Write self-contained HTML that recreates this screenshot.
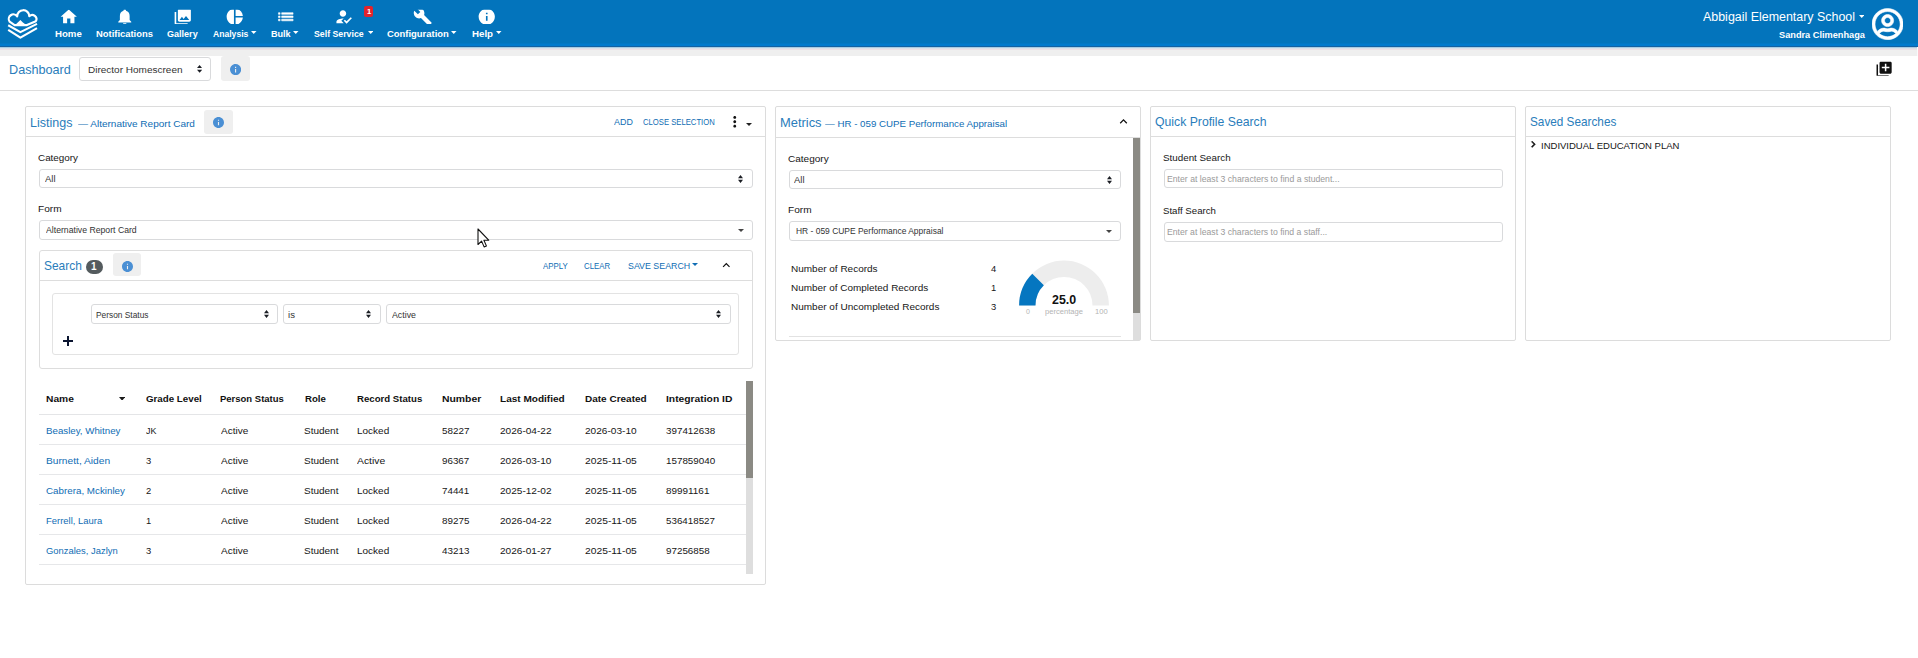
<!DOCTYPE html>
<html lang="en"><head><meta charset="utf-8"><title>Dashboard</title>
<style>
html,body{margin:0;padding:0;background:#fff}
body{width:1918px;height:658px;position:relative;overflow:hidden;font-family:"Liberation Sans", sans-serif;}
body>div,body>span,body>svg{position:absolute;display:block}
body>span{white-space:pre;transform-origin:0 0}
</style></head><body>
<div style="left:0px;top:46px;width:1918px;height:10px;background:#efefef"></div>
<div style="left:0px;top:0px;width:1918px;height:46px;background:#0374bc"></div>
<div style="left:0px;top:43px;width:1918px;height:1px;background:#0377c4"></div>
<div style="left:0px;top:44px;width:1918px;height:2px;background:#027acd"></div>
<div style="left:0px;top:46px;width:1918px;height:1px;background:#1560a2"></div>
<div style="left:0px;top:47px;width:1918px;height:1px;background:#a9cce2"></div>
<div style="left:0px;top:48px;width:1918px;height:1px;background:#dde0e9"></div>
<div style="left:0px;top:49px;width:1918px;height:1px;background:#ece1e6"></div>
<div style="left:1917px;top:47px;width:1px;height:9px;background:#fafafa"></div>
<svg style="left:0px;top:0px;" width="46" height="46" viewBox="0 0 46 46" fill="#fff">
<g fill="none" stroke="#fff" stroke-width="2.15" stroke-linejoin="round" stroke-linecap="butt">
<path d="M14.600 25.100L9.600 21.700A4.100 4.100 0 0 1 17.200 16.400A5.700 5.700 0 0 1 29.300 16.100A4.200 4.200 0 0 1 35.800 21.300L27 25.100z"/>
<path d="M8.200 25.300l12.200 6.800 16.600-8.200"/>
<path d="M8.200 29.900l12.200 7.700 16.600-9.500"/>
</g>
<path d="M14.600 25.600l5.800-5.500 2.500 2.300 4.200 3.200z" fill="#fff"/>
</svg>
<svg style="left:58.6px;top:7.1px;clip-path:inset(2.56px 0 2.5px 0)" width="19.5" height="19.5" viewBox="0 0 24 24" fill="#fff"><path d="M10 20v-6h4v6h5v-8h3L12 3 2 12h3v8z"/></svg>
<span id="t0" style="left:55.00px;top:29.83px;font-size:9.3px;line-height:9.3px;font-weight:700;color:#fff;transform:scaleX(1.0378);">Home</span>
<svg style="left:114.85px;top:7.1px;clip-path:inset(2.56px 0 2.5px 0)" width="19.5" height="19.5" viewBox="0 0 24 24" fill="#fff"><path d="M12 22c1.100 0 2-.9 2-2h-4c0 1.100.89 2 2 2zm6-6v-5c0-3.070-1.640-5.640-4.500-6.320V4c0-.83-.67-1.500-1.500-1.500s-1.500.67-1.500 1.500v.68C7.630 5.360 6 7.920 6 11v5l-2 2v1h16v-1l-2-2z"/></svg>
<span id="t1" style="left:96.00px;top:29.83px;font-size:9.3px;line-height:9.3px;font-weight:700;color:#fff;transform:scaleX(1.0105);">Notifications</span>
<svg style="left:173.15px;top:7.1px;clip-path:inset(2.56px 0 2.5px 0)" width="19.5" height="19.5" viewBox="0 0 24 24" fill="#fff"><path d="M22 16V4c0-1.100-.9-2-2-2H8c-1.100 0-2 .9-2 2v12c0 1.100.9 2 2 2h12c1.100 0 2-.9 2-2zm-11-4l2.030 2.710L16 11l4 5H8l3-4zM2 6v14c0 1.100.9 2 2 2h14v-2H4V6H2z"/></svg>
<span id="t2" style="left:167.00px;top:29.83px;font-size:9.3px;line-height:9.3px;font-weight:700;color:#fff;transform:scaleX(0.9723);">Gallery</span>
<svg style="left:225.3px;top:7.1px;clip-path:inset(2.56px 0 2.5px 0)" width="19.5" height="19.5" viewBox="0 0 24 24" fill="#fff"><path d="M11 2v20c-5.070-.5-9-4.790-9-10s3.930-9.500 9-10zm2.030 0v8.990H22c-.47-4.740-4.240-8.520-8.970-8.990zm0 11.010V22c4.740-.47 8.500-4.250 8.970-8.990h-8.970z"/></svg>
<span id="t3" style="left:213.00px;top:29.83px;font-size:9.3px;line-height:9.3px;font-weight:700;color:#fff;transform:scaleX(0.9237);">Analysis</span>
<svg style="left:251.3px;top:31px" width="5.5" height="3" viewBox="0 0 10 5" preserveAspectRatio="none" fill="#fff"><path d="M0 0h10L5 5z"/></svg>
<svg style="left:275.65px;top:7.1px;clip-path:inset(2.56px 0 2.5px 0)" width="19.5" height="19.5" viewBox="0 0 24 24" fill="#fff"><path stroke="#fff" stroke-width="0.7" d="M3 13h2v-2H3v2zm0 4h2v-2H3v2zm0-8h2V7H3v2zm4 4h14v-2H7v2zm0 4h14v-2H7v2zM7 7v2h14V7H7z"/></svg>
<span id="t4" style="left:271.00px;top:29.83px;font-size:9.3px;line-height:9.3px;font-weight:700;color:#fff;transform:scaleX(0.9764);">Bulk</span>
<svg style="left:293.3px;top:31px" width="5.5" height="3" viewBox="0 0 10 5" preserveAspectRatio="none" fill="#fff"><path d="M0 0h10L5 5z"/></svg>
<svg style="left:334.25px;top:7.1px;clip-path:inset(2.56px 0 2.5px 0)" width="19.5" height="19.5" viewBox="0 0 24 24" fill="#fff"><path d="M9 17l3-2.940c-.39-.04-.68-.06-1-.06-2.670 0-8 1.340-8 4v2h9l-3-3zm2-5c2.210 0 4-1.790 4-4s-1.790-4-4-4-4 1.790-4 4 1.790 4 4 4m4.470 8.500L12 17l1.400-1.410 2.070 2.080 5.130-5.170 1.400 1.410z"/></svg>
<span id="t5" style="left:314.00px;top:29.83px;font-size:9.3px;line-height:9.3px;font-weight:700;color:#fff;transform:scaleX(0.9414);">Self Service</span>
<svg style="left:367.6px;top:31px" width="5.5" height="3" viewBox="0 0 10 5" preserveAspectRatio="none" fill="#fff"><path d="M0 0h10L5 5z"/></svg>
<svg style="left:412.5px;top:7.1px;clip-path:inset(2.56px 0 2.5px 0)" width="19.5" height="19.5" viewBox="0 0 24 24" fill="#fff"><path d="M22.700 19l-9.100-9.100c.9-2.300.4-5-1.500-6.900-2-2-5-2.400-7.400-1.300L9 6 6 9 1.600 4.700C.4 7.100.9 10.100 2.900 12.100c1.900 1.900 4.600 2.400 6.900 1.500l9.100 9.100c.4.4 1 .4 1.400 0l2.300-2.300c.5-.4.5-1.100.1-1.400z"/></svg>
<span id="t6" style="left:387.00px;top:29.83px;font-size:9.3px;line-height:9.3px;font-weight:700;color:#fff;transform:scaleX(1.0141);">Configuration</span>
<svg style="left:451.3px;top:31px" width="5.5" height="3" viewBox="0 0 10 5" preserveAspectRatio="none" fill="#fff"><path d="M0 0h10L5 5z"/></svg>
<svg style="left:477.3px;top:7.1px;clip-path:inset(2.56px 0 2.5px 0)" width="19.5" height="19.5" viewBox="0 0 24 24" fill="#fff"><path d="M12 2C6.480 2 2 6.480 2 12s4.480 10 10 10 10-4.480 10-10S17.520 2 12 2zm1 15h-2v-6h2v6zm0-8h-2V7h2v2z"/></svg>
<span id="t7" style="left:472.00px;top:29.83px;font-size:9.3px;line-height:9.3px;font-weight:700;color:#fff;transform:scaleX(1.0453);">Help</span>
<svg style="left:496px;top:31px" width="5.5" height="3" viewBox="0 0 10 5" preserveAspectRatio="none" fill="#fff"><path d="M0 0h10L5 5z"/></svg>
<div style="left:363.6px;top:6.2px;width:9.9px;height:10.7px;background:#e3232c;border-radius:2px"></div>
<span id="t8" style="left:367.00px;top:8.47px;font-size:7.6px;line-height:7.6px;font-weight:700;color:#fff;">1</span>
<span id="t9" style="left:1703.00px;top:11.39px;font-size:12.3px;line-height:12.3px;font-weight:400;color:#fff;transform:scaleX(1.0110);">Abbigail Elementary School</span>
<svg style="left:1858.6px;top:15px" width="5.5" height="3" viewBox="0 0 10 5" preserveAspectRatio="none" fill="#fff"><path d="M0 0h10L5 5z"/></svg>
<span id="t10" style="left:1779.00px;top:31.13px;font-size:9.3px;line-height:9.3px;font-weight:700;color:#fff;transform:scaleX(0.9905);">Sandra Climenhaga</span>
<svg style="left:1872.3px;top:8.1px;" width="31.2" height="32.2" viewBox="0 0 496 512" fill="#fff"><path stroke="#fff" stroke-width="9" d="M248 104c-53 0-96 43-96 96s43 96 96 96 96-43 96-96-43-96-96-96zm0 144c-26.500 0-48-21.500-48-48s21.500-48 48-48 48 21.500 48 48-21.500 48-48 48zm0-240C111 8 0 119 0 256s111 248 248 248 248-111 248-248S385 8 248 8zm0 448c-49.700 0-95.100-18.300-130.100-48.400 14.900-23 40.400-38.600 69.600-39.500 20.800 6.400 40.600 9.600 60.500 9.600s39.700-3.100 60.500-9.600c29.200 1 54.700 16.500 69.600 39.500-35 30.100-80.400 48.400-130.100 48.400zm162.700-84.100c-24.400-31.400-62.100-51.900-105.100-51.900-10.200 0-26 9.600-57.600 9.600-31.500 0-47.400-9.600-57.600-9.600-42.900 0-80.600 20.500-105.100 51.900C61.900 339.200 48 299.200 48 256c0-110.300 89.700-200 200-200s200 89.700 200 200c0 43.200-13.900 83.200-37.300 115.900z"/></svg>
<div style="left:0px;top:90px;width:1918px;height:1px;background:#ddd"></div>
<span id="t11" style="left:9.00px;top:62.64px;font-size:13.3px;line-height:13.3px;font-weight:400;color:#2a7dbb;transform:scaleX(0.9509);">Dashboard</span>
<div style="left:79px;top:57px;width:132px;height:24px;border:1px solid #d9dadc;border-radius:3px;box-sizing:border-box;background:#fff"></div>
<span id="t12" style="left:88.00px;top:65.07px;font-size:9.6px;line-height:9.6px;font-weight:400;color:#333;transform:scaleX(1.0427);">Director Homescreen</span>
<svg style="left:197.0px;top:65.2px" width="5.2" height="7.8" viewBox="0 0 4 5" preserveAspectRatio="none" fill="#1b1e24"><path d="M2 0L0 2h4zm0 5L0 3h4z"/></svg>
<div style="left:221px;top:56px;width:29px;height:25px;background:#efefef;border-radius:3px"></div>
<svg style="left:229.9px;top:63.6px" width="11.2" height="11.2" viewBox="2 2 20 20" fill="#4a8fd4"><path d="M12 2C6.48 2 2 6.48 2 12s4.48 10 10 10 10-4.480 10-10S17.520 2 12 2zm1 15h-2v-6h2v6zm0-8h-2V7h2v2z"/></svg>
<svg style="left:1875.3px;top:59.5px;clip-path:inset(2px 0 2px 0)" width="18.2" height="18.2" viewBox="0 0 24 24" fill="#111"><path d="M4 6H2v14c0 1.100.9 2 2 2h14v-2H4V6zm16-4H8c-1.100 0-2 .9-2 2v12c0 1.100.9 2 2 2h12c1.100 0 2-.9 2-2V4c0-1.100-.9-2-2-2zm-1 9h-4v4h-2v-4H9V9h4V5h2v4h4v2z"/></svg>
<div style="left:25px;top:106px;width:741px;height:479px;border:1px solid #dcdcdc;border-radius:2px;box-sizing:border-box;background:#fff"></div>
<div style="left:25px;top:136px;width:741px;height:1px;background:#ddd"></div>
<span id="t13" style="left:30.00px;top:115.74px;font-size:13.3px;line-height:13.3px;font-weight:400;color:#2a7dbb;transform:scaleX(0.9418);">Listings</span>
<span id="t14" style="left:78.00px;top:118.87px;font-size:9.6px;line-height:9.6px;font-weight:400;color:#0f6db4;transform:scaleX(1.0440);">— Alternative Report Card</span>
<div style="left:203.8px;top:110px;width:29px;height:24px;background:#efefef;border-radius:3px"></div>
<svg style="left:212.8px;top:116.9px" width="11" height="11" viewBox="2 2 20 20" fill="#4a8fd4"><path d="M12 2C6.48 2 2 6.48 2 12s4.48 10 10 10 10-4.480 10-10S17.520 2 12 2zm1 15h-2v-6h2v6zm0-8h-2V7h2v2z"/></svg>
<span id="t15" style="left:614.00px;top:118.28px;font-size:9px;line-height:9px;font-weight:400;color:#0f6db4;transform:scaleX(0.9923);">ADD</span>
<span id="t16" style="left:643.00px;top:118.28px;font-size:9px;line-height:9px;font-weight:400;color:#0f6db4;transform:scaleX(0.8541);">CLOSE SELECTION</span>
<svg style="left:725.55px;top:113.3px;" width="17.5" height="17.5" viewBox="0 0 24 24" fill="#111"><path d="M12 8c1.100 0 2-.9 2-2s-.9-2-2-2-2 .9-2 2 .9 2 2 2zm0 2c-1.100 0-2 .9-2 2s.9 2 2 2 2-.9 2-2-.9-2-2-2zm0 6c-1.100 0-2 .9-2 2s.9 2 2 2 2-.9 2-2-.9-2-2-2z"/></svg>
<svg style="left:745.9px;top:123px" width="6" height="3" viewBox="0 0 10 5" preserveAspectRatio="none" fill="#222"><path d="M0 0h10L5 5z"/></svg>
<span id="t17" style="left:38.00px;top:152.86px;font-size:9.5px;line-height:9.5px;font-weight:400;color:#161616;transform:scaleX(1.0390);">Category</span>
<div style="left:39px;top:169px;width:714px;height:19px;border:1px solid #d9dadc;border-radius:3px;box-sizing:border-box;background:#fff"></div>
<span id="t18" style="left:45.00px;top:175.18px;font-size:9px;line-height:9px;font-weight:400;color:#333;transform:scaleX(1.0490);">All</span>
<svg style="left:738.1px;top:175px" width="5" height="8" viewBox="0 0 4 5" preserveAspectRatio="none" fill="#1b1e24"><path d="M2 0L0 2h4zm0 5L0 3h4z"/></svg>
<span id="t19" style="left:38.00px;top:203.86px;font-size:9.5px;line-height:9.5px;font-weight:400;color:#161616;transform:scaleX(1.0622);">Form</span>
<div style="left:39px;top:220px;width:714px;height:20px;border:1px solid #d9dadc;border-radius:3px;box-sizing:border-box;background:#fff"></div>
<span id="t20" style="left:46.00px;top:226.18px;font-size:9px;line-height:9px;font-weight:400;color:#333;transform:scaleX(0.9644);">Alternative Report Card</span>
<svg style="left:738px;top:228.7px" width="6" height="3" viewBox="0 0 10 5" preserveAspectRatio="none" fill="#444"><path d="M0 0h10L5 5z"/></svg>
<div style="left:39px;top:250px;width:714px;height:118.5px;border:1px solid #ddd;border-radius:3px;box-sizing:border-box"></div>
<div style="left:39px;top:280px;width:714px;height:1px;background:#ddd"></div>
<span id="t21" style="left:44.00px;top:259.14px;font-size:13.3px;line-height:13.3px;font-weight:400;color:#2a7dbb;transform:scaleX(0.8990);">Search</span>
<div style="left:85.9px;top:260.2px;width:17px;height:13.4px;background:#545b5e;border-radius:7px"></div>
<span id="t22" style="left:91.00px;top:261.94px;font-size:10px;line-height:10px;font-weight:700;color:#fff;">1</span>
<div style="left:113px;top:253.4px;width:27.6px;height:23.1px;background:#efefef;border-radius:3px"></div>
<svg style="left:121.7px;top:260.6px" width="11" height="11" viewBox="2 2 20 20" fill="#4a8fd4"><path d="M12 2C6.48 2 2 6.48 2 12s4.48 10 10 10 10-4.480 10-10S17.520 2 12 2zm1 15h-2v-6h2v6zm0-8h-2V7h2v2z"/></svg>
<span id="t23" style="left:543.00px;top:261.58px;font-size:9px;line-height:9px;font-weight:400;color:#0f6db4;transform:scaleX(0.8708);">APPLY</span>
<span id="t24" style="left:584.00px;top:261.58px;font-size:9px;line-height:9px;font-weight:400;color:#0f6db4;transform:scaleX(0.8698);">CLEAR</span>
<span id="t25" style="left:628.00px;top:261.58px;font-size:9px;line-height:9px;font-weight:400;color:#0f6db4;transform:scaleX(0.9811);">SAVE SEARCH</span>
<svg style="left:692px;top:262.8px" width="6" height="3" viewBox="0 0 10 5" preserveAspectRatio="none" fill="#0f6db4"><path d="M0 0h10L5 5z"/></svg>
<svg style="left:719.3px;top:257.5px;" width="14.6" height="14.6" viewBox="0 0 24 24" fill="#111"><path d="M12 8l-6 6 1.410 1.410L12 10.830l4.590 4.580L18 14z"/></svg>
<div style="left:52px;top:293px;width:687px;height:61.5px;border:1px solid #e3e3e3;border-radius:3px;box-sizing:border-box"></div>
<div style="left:91px;top:304px;width:187px;height:20px;border:1px solid #d9dadc;border-radius:3px;box-sizing:border-box;background:#fff"></div>
<span id="t26" style="left:96.00px;top:310.88px;font-size:9px;line-height:9px;font-weight:400;color:#333;transform:scaleX(0.9281);">Person Status</span>
<svg style="left:264.20000000000005px;top:310px" width="5" height="8" viewBox="0 0 4 5" preserveAspectRatio="none" fill="#1b1e24"><path d="M2 0L0 2h4zm0 5L0 3h4z"/></svg>
<div style="left:283.2px;top:304px;width:97.6px;height:20px;border:1px solid #d9dadc;border-radius:3px;box-sizing:border-box;background:#fff"></div>
<span id="t27" style="left:288.00px;top:310.88px;font-size:9px;line-height:9px;font-weight:400;color:#333;transform:scaleX(1.0668);">is</span>
<svg style="left:366.20000000000005px;top:310px" width="5" height="8" viewBox="0 0 4 5" preserveAspectRatio="none" fill="#1b1e24"><path d="M2 0L0 2h4zm0 5L0 3h4z"/></svg>
<div style="left:386.2px;top:304px;width:344.8px;height:20px;border:1px solid #d9dadc;border-radius:3px;box-sizing:border-box;background:#fff"></div>
<span id="t28" style="left:392.00px;top:310.88px;font-size:9px;line-height:9px;font-weight:400;color:#333;transform:scaleX(0.9779);">Active</span>
<svg style="left:716.1px;top:310px" width="5" height="8" viewBox="0 0 4 5" preserveAspectRatio="none" fill="#1b1e24"><path d="M2 0L0 2h4zm0 5L0 3h4z"/></svg>
<div style="left:62.8px;top:340.1px;width:10.2px;height:1.5px;background:#0b1530"></div>
<div style="left:67.2px;top:335.8px;width:1.5px;height:10.2px;background:#0b1530"></div>
<span id="t29" style="left:46.00px;top:393.84px;font-size:9.4px;line-height:9.4px;font-weight:700;color:#111;transform:scaleX(1.0902);">Name</span>
<span id="t30" style="left:146.00px;top:393.84px;font-size:9.4px;line-height:9.4px;font-weight:700;color:#111;transform:scaleX(1.0389);">Grade Level</span>
<span id="t31" style="left:220.00px;top:393.84px;font-size:9.4px;line-height:9.4px;font-weight:700;color:#111;transform:scaleX(1.0122);">Person Status</span>
<span id="t32" style="left:305.00px;top:393.84px;font-size:9.4px;line-height:9.4px;font-weight:700;color:#111;transform:scaleX(1.0297);">Role</span>
<span id="t33" style="left:357.00px;top:393.84px;font-size:9.4px;line-height:9.4px;font-weight:700;color:#111;transform:scaleX(1.0267);">Record Status</span>
<span id="t34" style="left:442.00px;top:393.84px;font-size:9.4px;line-height:9.4px;font-weight:700;color:#111;transform:scaleX(1.1090);">Number</span>
<span id="t35" style="left:500.00px;top:393.84px;font-size:9.4px;line-height:9.4px;font-weight:700;color:#111;transform:scaleX(1.0709);">Last Modified</span>
<span id="t36" style="left:585.00px;top:393.84px;font-size:9.4px;line-height:9.4px;font-weight:700;color:#111;transform:scaleX(1.0652);">Date Created</span>
<span id="t37" style="left:666.00px;top:393.84px;font-size:9.4px;line-height:9.4px;font-weight:700;color:#111;transform:scaleX(1.0981);">Integration ID</span>
<svg style="left:118.8px;top:396.5px" width="6.2" height="3.7" viewBox="0 0 10 5" preserveAspectRatio="none" fill="#1a1a1a"><path d="M0 0h10L5 5z"/></svg>
<div style="left:39px;top:414px;width:707px;height:1px;background:#e4e5e7"></div>
<div style="left:39px;top:444px;width:707px;height:1px;background:#e6e7e9"></div>
<span id="t38" style="left:46.00px;top:426.04px;font-size:9.4px;line-height:9.4px;font-weight:400;color:#0f6db4;transform:scaleX(1.0372);">Beasley, Whitney</span>
<span id="t39" style="left:146.00px;top:426.04px;font-size:9.4px;line-height:9.4px;font-weight:400;color:#161616;transform:scaleX(0.9521);">JK</span>
<span id="t40" style="left:221.00px;top:426.04px;font-size:9.4px;line-height:9.4px;font-weight:400;color:#161616;transform:scaleX(1.0648);">Active</span>
<span id="t41" style="left:304.00px;top:426.04px;font-size:9.4px;line-height:9.4px;font-weight:400;color:#161616;transform:scaleX(1.0657);">Student</span>
<span id="t42" style="left:357.00px;top:426.04px;font-size:9.4px;line-height:9.4px;font-weight:400;color:#161616;transform:scaleX(1.0646);">Locked</span>
<span id="t43" style="left:442.00px;top:426.04px;font-size:9.4px;line-height:9.4px;font-weight:400;color:#161616;transform:scaleX(1.0522);">58227</span>
<span id="t44" style="left:500.00px;top:426.04px;font-size:9.4px;line-height:9.4px;font-weight:400;color:#161616;transform:scaleX(1.0741);">2026-04-22</span>
<span id="t45" style="left:585.00px;top:426.04px;font-size:9.4px;line-height:9.4px;font-weight:400;color:#161616;transform:scaleX(1.0769);">2026-03-10</span>
<span id="t46" style="left:666.00px;top:426.04px;font-size:9.4px;line-height:9.4px;font-weight:400;color:#161616;transform:scaleX(1.0470);">397412638</span>
<div style="left:39px;top:474px;width:707px;height:1px;background:#e6e7e9"></div>
<span id="t47" style="left:46.00px;top:456.04px;font-size:9.4px;line-height:9.4px;font-weight:400;color:#0f6db4;transform:scaleX(1.0877);">Burnett, Aiden</span>
<span id="t48" style="left:146.00px;top:456.04px;font-size:9.4px;line-height:9.4px;font-weight:400;color:#161616;">3</span>
<span id="t49" style="left:221.00px;top:456.04px;font-size:9.4px;line-height:9.4px;font-weight:400;color:#161616;transform:scaleX(1.0648);">Active</span>
<span id="t50" style="left:304.00px;top:456.04px;font-size:9.4px;line-height:9.4px;font-weight:400;color:#161616;transform:scaleX(1.0657);">Student</span>
<span id="t51" style="left:357.00px;top:456.04px;font-size:9.4px;line-height:9.4px;font-weight:400;color:#161616;transform:scaleX(1.1038);">Active</span>
<span id="t52" style="left:442.00px;top:456.04px;font-size:9.4px;line-height:9.4px;font-weight:400;color:#161616;transform:scaleX(1.0462);">96367</span>
<span id="t53" style="left:500.00px;top:456.04px;font-size:9.4px;line-height:9.4px;font-weight:400;color:#161616;transform:scaleX(1.0708);">2026-03-10</span>
<span id="t54" style="left:585.00px;top:456.04px;font-size:9.4px;line-height:9.4px;font-weight:400;color:#161616;transform:scaleX(1.0969);">2025-11-05</span>
<span id="t55" style="left:666.00px;top:456.04px;font-size:9.4px;line-height:9.4px;font-weight:400;color:#161616;transform:scaleX(1.0488);">157859040</span>
<div style="left:39px;top:504px;width:707px;height:1px;background:#e6e7e9"></div>
<span id="t56" style="left:46.00px;top:486.04px;font-size:9.4px;line-height:9.4px;font-weight:400;color:#0f6db4;transform:scaleX(1.0453);">Cabrera, Mckinley</span>
<span id="t57" style="left:146.00px;top:486.04px;font-size:9.4px;line-height:9.4px;font-weight:400;color:#161616;">2</span>
<span id="t58" style="left:221.00px;top:486.04px;font-size:9.4px;line-height:9.4px;font-weight:400;color:#161616;transform:scaleX(1.0648);">Active</span>
<span id="t59" style="left:304.00px;top:486.04px;font-size:9.4px;line-height:9.4px;font-weight:400;color:#161616;transform:scaleX(1.0657);">Student</span>
<span id="t60" style="left:357.00px;top:486.04px;font-size:9.4px;line-height:9.4px;font-weight:400;color:#161616;transform:scaleX(1.0646);">Locked</span>
<span id="t61" style="left:442.00px;top:486.04px;font-size:9.4px;line-height:9.4px;font-weight:400;color:#161616;transform:scaleX(1.0453);">74441</span>
<span id="t62" style="left:500.00px;top:486.04px;font-size:9.4px;line-height:9.4px;font-weight:400;color:#161616;transform:scaleX(1.0741);">2025-12-02</span>
<span id="t63" style="left:585.00px;top:486.04px;font-size:9.4px;line-height:9.4px;font-weight:400;color:#161616;transform:scaleX(1.0969);">2025-11-05</span>
<span id="t64" style="left:666.00px;top:486.04px;font-size:9.4px;line-height:9.4px;font-weight:400;color:#161616;transform:scaleX(1.0580);">89991161</span>
<div style="left:39px;top:534px;width:707px;height:1px;background:#e6e7e9"></div>
<span id="t65" style="left:46.00px;top:516.04px;font-size:9.4px;line-height:9.4px;font-weight:400;color:#0f6db4;transform:scaleX(1.0069);">Ferrell, Laura</span>
<span id="t66" style="left:146.00px;top:516.04px;font-size:9.4px;line-height:9.4px;font-weight:400;color:#161616;">1</span>
<span id="t67" style="left:221.00px;top:516.04px;font-size:9.4px;line-height:9.4px;font-weight:400;color:#161616;transform:scaleX(1.0648);">Active</span>
<span id="t68" style="left:304.00px;top:516.04px;font-size:9.4px;line-height:9.4px;font-weight:400;color:#161616;transform:scaleX(1.0657);">Student</span>
<span id="t69" style="left:357.00px;top:516.04px;font-size:9.4px;line-height:9.4px;font-weight:400;color:#161616;transform:scaleX(1.0646);">Locked</span>
<span id="t70" style="left:442.00px;top:516.04px;font-size:9.4px;line-height:9.4px;font-weight:400;color:#161616;transform:scaleX(1.0520);">89275</span>
<span id="t71" style="left:500.00px;top:516.04px;font-size:9.4px;line-height:9.4px;font-weight:400;color:#161616;transform:scaleX(1.0741);">2026-04-22</span>
<span id="t72" style="left:585.00px;top:516.04px;font-size:9.4px;line-height:9.4px;font-weight:400;color:#161616;transform:scaleX(1.0969);">2025-11-05</span>
<span id="t73" style="left:666.00px;top:516.04px;font-size:9.4px;line-height:9.4px;font-weight:400;color:#161616;transform:scaleX(1.0444);">536418527</span>
<div style="left:39px;top:564px;width:707px;height:1px;background:#e6e7e9"></div>
<span id="t74" style="left:46.00px;top:546.04px;font-size:9.4px;line-height:9.4px;font-weight:400;color:#0f6db4;transform:scaleX(1.0052);">Gonzales, Jazlyn</span>
<span id="t75" style="left:146.00px;top:546.04px;font-size:9.4px;line-height:9.4px;font-weight:400;color:#161616;">3</span>
<span id="t76" style="left:221.00px;top:546.04px;font-size:9.4px;line-height:9.4px;font-weight:400;color:#161616;transform:scaleX(1.0648);">Active</span>
<span id="t77" style="left:304.00px;top:546.04px;font-size:9.4px;line-height:9.4px;font-weight:400;color:#161616;transform:scaleX(1.0657);">Student</span>
<span id="t78" style="left:357.00px;top:546.04px;font-size:9.4px;line-height:9.4px;font-weight:400;color:#161616;transform:scaleX(1.0646);">Locked</span>
<span id="t79" style="left:442.00px;top:546.04px;font-size:9.4px;line-height:9.4px;font-weight:400;color:#161616;transform:scaleX(1.0523);">43213</span>
<span id="t80" style="left:500.00px;top:546.04px;font-size:9.4px;line-height:9.4px;font-weight:400;color:#161616;transform:scaleX(1.0727);">2026-01-27</span>
<span id="t81" style="left:585.00px;top:546.04px;font-size:9.4px;line-height:9.4px;font-weight:400;color:#161616;transform:scaleX(1.0969);">2025-11-05</span>
<span id="t82" style="left:666.00px;top:546.04px;font-size:9.4px;line-height:9.4px;font-weight:400;color:#161616;transform:scaleX(1.0476);">97256858</span>
<div style="left:746px;top:381px;width:7px;height:193px;background:#dedede"></div>
<div style="left:746px;top:381px;width:7px;height:97px;background:#8b8a84"></div>
<svg style="left:476.5px;top:227.6px;" width="13" height="20" viewBox="0 0 13 20" fill="none"><path d="M1 1v15.500l3.600-3.400 2.500 5.800 2.300-1-2.500-5.700h4.800z" fill="#fff" stroke="#111" stroke-width="1.100" stroke-linejoin="round"/></svg>
<div style="left:775px;top:106px;width:366px;height:235px;border:1px solid #dcdcdc;border-radius:2px;box-sizing:border-box;background:#fff"></div>
<div style="left:775px;top:137px;width:366px;height:1px;background:#ddd"></div>
<span id="t83" style="left:780.00px;top:116.34px;font-size:13.3px;line-height:13.3px;font-weight:400;color:#2a7dbb;transform:scaleX(0.9700);">Metrics</span>
<span id="t84" style="left:825.00px;top:119.47px;font-size:9.6px;line-height:9.6px;font-weight:400;color:#0f6db4;transform:scaleX(1.0132);">— HR - 059 CUPE Performance Appraisal</span>
<svg style="left:1116.2px;top:114.2px;" width="15" height="15" viewBox="0 0 24 24" fill="#111"><path d="M12 8l-6 6 1.410 1.410L12 10.830l4.590 4.580L18 14z"/></svg>
<div style="left:1133px;top:138px;width:7px;height:202px;background:#dedede"></div>
<div style="left:1133px;top:138px;width:7px;height:175px;background:#8b8a84"></div>
<span id="t85" style="left:788.00px;top:153.86px;font-size:9.5px;line-height:9.5px;font-weight:400;color:#161616;transform:scaleX(1.0567);">Category</span>
<div style="left:788.5px;top:170px;width:332.5px;height:19px;border:1px solid #d9dadc;border-radius:3px;box-sizing:border-box;background:#fff"></div>
<span id="t86" style="left:794.00px;top:176.18px;font-size:9px;line-height:9px;font-weight:400;color:#333;transform:scaleX(1.0490);">All</span>
<svg style="left:1106.8px;top:176px" width="5" height="8" viewBox="0 0 4 5" preserveAspectRatio="none" fill="#1b1e24"><path d="M2 0L0 2h4zm0 5L0 3h4z"/></svg>
<span id="t87" style="left:788.00px;top:204.76px;font-size:9.5px;line-height:9.5px;font-weight:400;color:#161616;transform:scaleX(1.0622);">Form</span>
<div style="left:788.5px;top:221px;width:332.5px;height:20px;border:1px solid #d9dadc;border-radius:3px;box-sizing:border-box;background:#fff"></div>
<span id="t88" style="left:796.00px;top:227.18px;font-size:9px;line-height:9px;font-weight:400;color:#333;transform:scaleX(0.9388);">HR - 059 CUPE Performance Appraisal</span>
<svg style="left:1105.5px;top:229.7px" width="6" height="3" viewBox="0 0 10 5" preserveAspectRatio="none" fill="#444"><path d="M0 0h10L5 5z"/></svg>
<span id="t89" style="left:791.00px;top:263.74px;font-size:9.4px;line-height:9.4px;font-weight:400;color:#161616;transform:scaleX(1.0651);">Number of Records</span>
<span id="t90" style="left:991.00px;top:263.74px;font-size:9.4px;line-height:9.4px;font-weight:400;color:#161616;">4</span>
<span id="t91" style="left:791.00px;top:283.04px;font-size:9.4px;line-height:9.4px;font-weight:400;color:#161616;transform:scaleX(1.0617);">Number of Completed Records</span>
<span id="t92" style="left:991.00px;top:283.04px;font-size:9.4px;line-height:9.4px;font-weight:400;color:#161616;">1</span>
<span id="t93" style="left:791.00px;top:302.34px;font-size:9.4px;line-height:9.4px;font-weight:400;color:#161616;transform:scaleX(1.0667);">Number of Uncompleted Records</span>
<span id="t94" style="left:991.00px;top:302.34px;font-size:9.4px;line-height:9.4px;font-weight:400;color:#161616;">3</span>
<svg style="left:0;top:0" width="1918" height="658" viewBox="0 0 1918 658"><path fill="#ededed" d="M1019.10 305.40A44.9 44.9 0 0 1 1108.90 305.40L1092.50 305.40A28.5 28.5 0 0 0 1035.50 305.40Z"/><path fill="#0576c0" d="M1019.10 305.40A44.9 44.9 0 0 1 1032.25 273.65L1043.85 285.25A28.5 28.5 0 0 0 1035.50 305.40Z"/></svg>
<span id="t95" style="left:1052.00px;top:293.64px;font-size:12px;line-height:12px;font-weight:700;color:#111;transform:scaleX(1.0312);">25.0</span>
<span id="t96" style="left:1026.00px;top:307.57px;font-size:7px;line-height:7px;font-weight:400;color:#b4b4b4;">0</span>
<span id="t97" style="left:1045.00px;top:308.15px;font-size:7.5px;line-height:7.5px;font-weight:400;color:#b4b4b4;transform:scaleX(1.0128);">percentage</span>
<span id="t98" style="left:1095.00px;top:307.57px;font-size:7px;line-height:7px;font-weight:400;color:#b4b4b4;transform:scaleX(1.0833);">100</span>
<div style="left:789px;top:336px;width:332px;height:1px;background:#e2e2e2"></div>
<div style="left:1150px;top:106px;width:366px;height:235px;border:1px solid #dcdcdc;border-radius:2px;box-sizing:border-box;background:#fff"></div>
<div style="left:1150px;top:136px;width:366px;height:1px;background:#ddd"></div>
<span id="t99" style="left:1155.00px;top:114.54px;font-size:13.3px;line-height:13.3px;font-weight:400;color:#2a7dbb;transform:scaleX(0.9199);">Quick Profile Search</span>
<span id="t100" style="left:1163.00px;top:152.76px;font-size:9.5px;line-height:9.5px;font-weight:400;color:#161616;transform:scaleX(1.0333);">Student Search</span>
<div style="left:1163.5px;top:169px;width:339.5px;height:19px;border:1px solid #d9dadc;border-radius:3px;box-sizing:border-box;background:#fff"></div>
<span id="t101" style="left:1167.00px;top:175.05px;font-size:8.8px;line-height:8.8px;font-weight:400;color:#9a9a9a;transform:scaleX(0.9857);">Enter at least 3 characters to find a student...</span>
<span id="t102" style="left:1163.00px;top:205.96px;font-size:9.5px;line-height:9.5px;font-weight:400;color:#161616;transform:scaleX(1.0149);">Staff Search</span>
<div style="left:1163.5px;top:222px;width:339.5px;height:20px;border:1px solid #d9dadc;border-radius:3px;box-sizing:border-box;background:#fff"></div>
<span id="t103" style="left:1167.00px;top:228.15px;font-size:8.8px;line-height:8.8px;font-weight:400;color:#9a9a9a;transform:scaleX(0.9851);">Enter at least 3 characters to find a staff...</span>
<div style="left:1525px;top:106px;width:366px;height:235px;border:1px solid #dcdcdc;border-radius:2px;box-sizing:border-box;background:#fff"></div>
<div style="left:1525px;top:136px;width:366px;height:1px;background:#ddd"></div>
<span id="t104" style="left:1530.00px;top:114.54px;font-size:13.3px;line-height:13.3px;font-weight:400;color:#2a7dbb;transform:scaleX(0.8845);">Saved Searches</span>
<svg style="left:1526.6px;top:138.4px;" width="12.5" height="12.5" viewBox="0 0 24 24" fill="#111"><path stroke="#111" stroke-width="1.2" d="M10 6L8.590 7.410 13.170 12l-4.580 4.590L10 18l6-6z"/></svg>
<span id="t105" style="left:1541.00px;top:142.38px;font-size:9px;line-height:9px;font-weight:400;color:#161616;transform:scaleX(1.0567);">INDIVIDUAL EDUCATION PLAN</span>
</body></html>
